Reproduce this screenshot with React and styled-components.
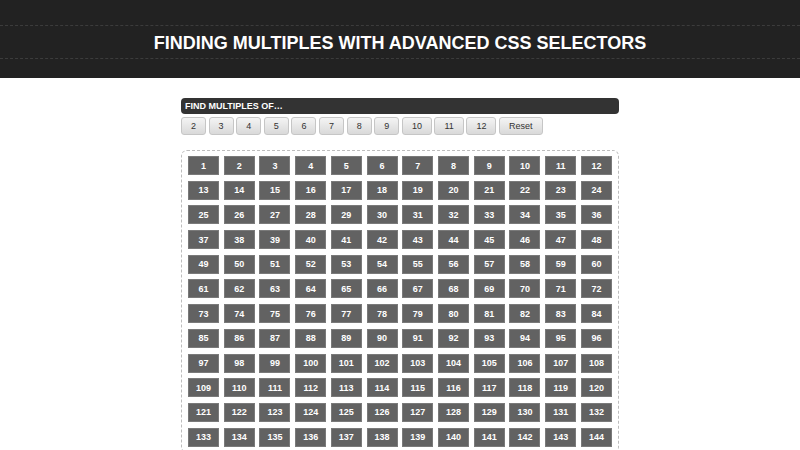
import React from "react";
import styled, { createGlobalStyle } from "styled-components";

const Global = createGlobalStyle`
  html, body { margin: 0; padding: 0; background: #fff; }
  body { font-family: "Liberation Sans", Arial, sans-serif; overflow: hidden; }
`;

const Header = styled.header`
  background: #222;
  padding: 25px 0 19px;
`;

const HeaderBand = styled.div`
  border-top: 1px dashed #3c3c3c;
  border-bottom: 1px dashed #3c3c3c;
  height: 32px;
  display: flex;
  align-items: center;
  justify-content: center;
`;

const Title = styled.h1`
  margin: 0;
  color: #fff;
  font-size: 18px;
  font-weight: bold;
  line-height: 32px;
  padding-top: 2px;
`;

const Main = styled.main`
  width: 438px;
  margin: 20px auto 0;
`;

const LabelBar = styled.div`
  background: #333;
  color: #fff;
  font-size: 9px;
  font-weight: bold;
  height: 16px;
  line-height: 16px;
  padding-left: 4px;
  border-radius: 4px;
`;

const ButtonRow = styled.div`
  display: flex;
  gap: 2.6px;
  margin-top: 3px;
`;

const Button = styled.button`
  font-family: "Liberation Sans", Arial, sans-serif;
  font-size: 9px;
  color: #333;
  height: 18px;
  padding: 0 9px;
  border: 1px solid #c6c6c6;
  border-radius: 3px;
  background: linear-gradient(#f4f4f4, #d9d9d9);
  cursor: pointer;
`;

const Grid = styled.ul`
  list-style: none;
  margin: 15px 0 0;
  box-sizing: border-box;
  width: 438px;
  padding: 5px 6px;
  border: 1px dashed #bdbdbd;
  border-radius: 6px;
  display: grid;
  grid-template-columns: repeat(12, 31px);
  grid-auto-rows: 19px;
  column-gap: 4.727px;
  row-gap: 5.7px;
`;

const Cell = styled.li`
  background: #626262;
  border: 1px solid #7a7a7a;
  box-sizing: border-box;
  color: #fff;
  font-size: 9px;
  font-weight: bold;
  display: flex;
  align-items: center;
  justify-content: center;
`;

const buttons = [2, 3, 4, 5, 6, 7, 8, 9, 10, 11, 12];
const cells = Array.from({ length: 144 }, (_, i) => i + 1);

export default function App() {
  return (
    <>
      <Global />
      <Header>
        <HeaderBand>
          <Title>FINDING MULTIPLES WITH ADVANCED CSS SELECTORS</Title>
        </HeaderBand>
      </Header>
      <Main>
        <LabelBar>FIND MULTIPLES OF…</LabelBar>
        <ButtonRow>
          {buttons.map((b) => (
            <Button key={b}>{b}</Button>
          ))}
          <Button>Reset</Button>
        </ButtonRow>
        <Grid>
          {cells.map((n) => (
            <Cell key={n}>{n}</Cell>
          ))}
        </Grid>
      </Main>
    </>
  );
}
